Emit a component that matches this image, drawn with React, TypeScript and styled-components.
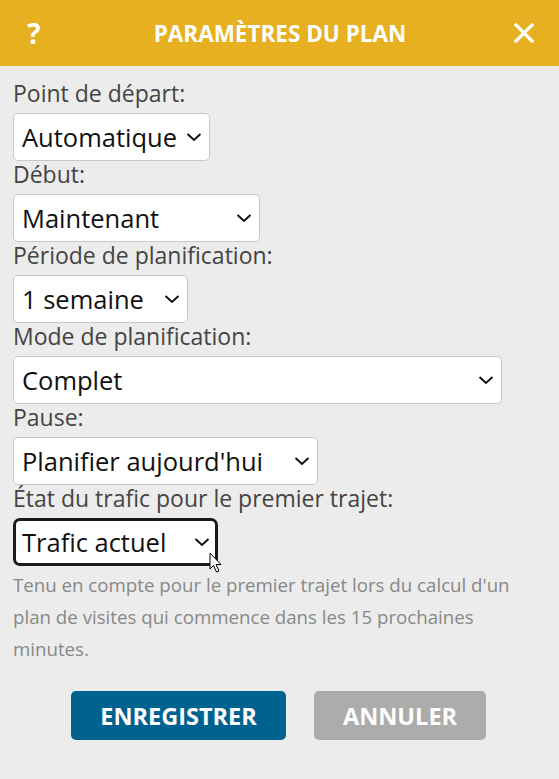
import React from "react";
import styled, { createGlobalStyle } from "styled-components";

const Global = createGlobalStyle`
  html, body { margin: 0; padding: 0; background: #ececec; }
  body { font-family: "Open Sans", "Noto Sans", sans-serif; }
  * { box-sizing: border-box; }
`;

const Page = styled.div`
  width: 559px;
  min-height: 779px;
  background: #ececec;
  display: flex;
  flex-direction: column;
`;

const Header = styled.header`
  height: 66px;
  background: #e6b021;
  display: flex;
  align-items: center;
  justify-content: space-between;
  padding: 0 25px 0 24px;
  color: #fff;
`;

const HeaderIcon = styled.span`
  font-weight: 700;
  font-size: 28px;
  width: 20px;
  display: flex;
  align-items: center;
  justify-content: center;
`;

const Title = styled.h1`
  margin: 0 0 0 2px;
  font-size: 22.5px;
  font-weight: 700;
`;

const Body = styled.div`
  padding: 14px 13px 0 13px;
  display: flex;
  flex-direction: column;
`;

const Field = styled.div`
  display: flex;
  flex-direction: column;
  align-items: flex-start;
`;

const Label = styled.label`
  font-size: 23px;
  line-height: 27px;
  color: #444;
  margin-bottom: 6px;
  white-space: nowrap;
`;

const SelectWrap = styled.div<{ $w: number }>`
  position: relative;
  width: ${(p) => p.$w}px;
  height: 48px;
`;

const Select = styled.select<{ $focused?: boolean }>`
  appearance: none;
  width: 100%;
  height: 100%;
  font-family: "Open Sans", sans-serif;
  font-size: 25.5px;
  color: #111;
  background: #fff;
  border: ${(p) => (p.$focused ? "3px solid #1a1a1a" : "1px solid #c6c9cc")};
  border-radius: ${(p) => (p.$focused ? "7px" : "5px")};
  padding: 0 0 0 ${(p) => (p.$focused ? "6px" : "8px")};
  outline: none;
`;

const Chevron = styled.svg`
  position: absolute;
  right: 8px;
  top: 50%;
  transform: translateY(-50%);
  pointer-events: none;
`;

const Cursor = styled.svg`
  position: absolute;
  left: 196px;
  top: 34px;
  pointer-events: none;
`;

const Help = styled.p`
  margin: 3px 0 0 0;
  font-size: 18.7px;
  line-height: 32px;
  color: #888;
`;

const Buttons = styled.div`
  display: flex;
  justify-content: center;
  gap: 28px;
  margin-top: 26px;
  padding-right: 2px;
`;

const Button = styled.button<{ $variant: "primary" | "muted"; $w: number }>`
  width: ${(p) => p.$w}px;
  height: 49px;
  border: none;
  border-radius: 5px;
  font-family: "Open Sans", sans-serif;
  font-weight: 700;
  font-size: 23.5px;
  color: #fff;
  background: ${(p) => (p.$variant === "primary" ? "#00628f" : "#acacac")};
`;

const fields: { label: string; value: string; width: number; focused?: boolean }[] = [
  { label: "Point de départ:", value: "Automatique", width: 197 },
  { label: "Début:", value: "Maintenant", width: 247 },
  { label: "Période de planification:", value: "1 semaine", width: 175 },
  { label: "Mode de planification:", value: "Complet", width: 489 },
  { label: "Pause:", value: "Planifier aujourd'hui", width: 305 },
  { label: "État du trafic pour le premier trajet:", value: "Trafic actuel", width: 205, focused: true },
];

export default function App() {
  return (
    <Page>
      <Global />
      <Header>
        <HeaderIcon>?</HeaderIcon>
        <Title>PARAMÈTRES DU PLAN</Title>
        <HeaderIcon>
          <svg width="20" height="20" viewBox="0 0 20 20">
            <path d="M2 2 L18 18 M18 2 L2 18" stroke="#fff" strokeWidth="3.2" strokeLinecap="square" />
          </svg>
        </HeaderIcon>
      </Header>
      <Body>
        {fields.map((f) => (
          <Field key={f.label}>
            <Label>{f.label}</Label>
            <SelectWrap $w={f.width}>
              <Select $focused={f.focused} defaultValue={f.value}>
                <option>{f.value}</option>
              </Select>
              <Chevron width="16" height="9" viewBox="0 0 16 9">
                <path d="M1.5 1.5 L8 7.5 L14.5 1.5" fill="none" stroke="#111" strokeWidth="2" />
              </Chevron>
              {f.focused && (
                <Cursor width="14" height="22" viewBox="0 0 14 22">
                  <path d="M1 1 L1 17 L4.5 13.5 L7.5 20 L10 19 L7 12.5 L12 12.5 Z" fill="#fff" stroke="#000" strokeWidth="1" />
                </Cursor>
              )}
            </SelectWrap>
          </Field>
        ))}
        <Help>
          Tenu en compte pour le premier trajet lors du calcul d'un plan de visites qui commence dans les 15 prochaines minutes.
        </Help>
        <Buttons>
          <Button $variant="primary" $w={215}>ENREGISTRER</Button>
          <Button $variant="muted" $w={172}>ANNULER</Button>
        </Buttons>
      </Body>
    </Page>
  );
}
